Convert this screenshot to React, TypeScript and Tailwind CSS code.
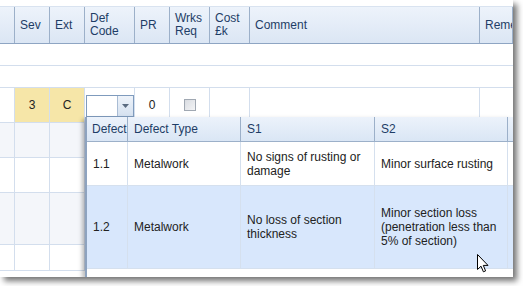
import React from 'react';

const cols = [
  { w: 'w-[15px]', label: '' },
  { w: 'w-[35px]', label: 'Sev' },
  { w: 'w-[35px]', label: 'Ext' },
  { w: 'w-[50px]', label: 'Def Code' },
  { w: 'w-[35px]', label: 'PR' },
  { w: 'w-[40px]', label: 'Wrks Req' },
  { w: 'w-[40px]', label: 'Cost £k' },
  { w: 'w-[230px]', label: 'Comment' },
  { w: 'flex-1', label: 'Remedial' },
];

const bodyRows = [
  { h: 'h-[22px]', bg: 'bg-white' },
  { h: 'h-[22px]', bg: 'bg-white' },
  { h: 'h-[35px]', bg: 'bg-white', edit: true },
  { h: 'h-[35px]', bg: 'bg-[#f4f6fa]' },
  { h: 'h-[35px]', bg: 'bg-white' },
  { h: 'h-[52px]', bg: 'bg-[#f4f6fa]' },
  { h: 'h-[26px]', bg: 'bg-white' },
];

const defects = [
  {
    code: '1.1',
    type: 'Metalwork',
    s1: 'No signs of rusting or damage',
    s2: 'Minor surface rusting',
    h: 'h-[44px]',
    selected: false,
  },
  {
    code: '1.2',
    type: 'Metalwork',
    s1: 'No loss of section thickness',
    s2: 'Minor section loss (penetration less than 5% of section)',
    h: 'h-[83px]',
    selected: true,
  },
];

function HeaderCell({ w, label }: { w: string; label: string }) {
  const words = label.split(' ');
  return (
    <div
      className={`${w} h-full shrink-0 border-r border-[#9cb0c9] px-[5px] flex flex-col justify-center overflow-hidden whitespace-nowrap leading-[13px]`}
    >
      {label === 'Comment' || label === 'Remedial' ? (
        <span>{label}</span>
      ) : (
        words.map((wd, i) => <span key={i}>{wd}</span>)
      )}
    </div>
  );
}

function EditRow() {
  return (
    <>
      <div className="w-[15px] shrink-0 border-r border-[#d3deed]" />
      <div className="w-[35px] shrink-0 border-r border-[#d3deed] bg-[#f6e6a8] flex items-center justify-center">3</div>
      <div className="w-[35px] shrink-0 border-r border-[#d3deed] bg-[#f6e6a8] flex items-center justify-center">C</div>
      <div className="w-[50px] shrink-0 border-r border-[#d3deed] relative">
        <div className="absolute left-[1px] top-[7px] w-[48px] h-[22px] border border-[#7f9bbd] bg-white flex">
          <div className="flex-1" />
          <div className="w-[16px] h-full border-l border-[#a9bcd4] bg-gradient-to-b from-[#eef3fa] to-[#d5e1f0] flex items-center justify-center">
            <svg width="7" height="4" viewBox="0 0 7 4">
              <path d="M0 0h7L3.5 4z" fill="#5a6b80" />
            </svg>
          </div>
        </div>
      </div>
      <div className="w-[35px] shrink-0 border-r border-[#d3deed] flex items-center justify-center">0</div>
      <div className="w-[40px] shrink-0 border-r border-[#d3deed] flex items-center justify-center">
        <div className="w-[12px] h-[12px] border border-[#a0a8b2] bg-gradient-to-br from-[#d8dbe0] to-[#f4f5f7] p-[1px]">
          <div className="w-full h-full bg-gradient-to-br from-[#dcdfe4] to-[#f0f1f3]" />
        </div>
      </div>
      <div className="w-[40px] shrink-0 border-r border-[#d3deed]" />
      <div className="w-[230px] shrink-0 border-r border-[#d3deed]" />
      <div className="flex-1" />
    </>
  );
}

function DefectPopup() {
  return (
    <div className="absolute left-[85px] top-[117px] right-0 bottom-0 bg-white border-l-2 border-[#8ea3bf] shadow-[-3px_2px_4px_rgba(0,0,0,0.25)] overflow-hidden">
      <div className="flex h-[25px] border-b border-[#9cb0c9] bg-gradient-to-b from-[#ecf2fb] to-[#dae6f5] text-[#1e3d66]">
        <div className="w-[41px] shrink-0 border-r border-[#9cb0c9] pl-[5px] flex items-center overflow-hidden">Defect</div>
        <div className="w-[113px] shrink-0 border-r border-[#9cb0c9] pl-[6px] flex items-center">Defect Type</div>
        <div className="w-[134px] shrink-0 border-r border-[#9cb0c9] pl-[6px] flex items-center">S1</div>
        <div className="w-[133px] shrink-0 border-r border-[#9cb0c9] pl-[6px] flex items-center">S2</div>
        <div className="flex-1" />
      </div>
      {defects.map((d) => (
        <div
          key={d.code}
          className={`flex ${d.h} border-b border-[#d5e0ee] ${d.selected ? 'bg-[#d8e7fc]' : 'bg-white'} text-[#222]`}
        >
          <div className="w-[41px] shrink-0 border-r border-[#d5e0ee] pl-[6px] flex items-center">{d.code}</div>
          <div className="w-[113px] shrink-0 border-r border-[#d5e0ee] pl-[6px] flex items-center">{d.type}</div>
          <div className="w-[134px] shrink-0 border-r border-[#d5e0ee] pl-[6px] pr-[6px] flex items-center leading-[14px]">{d.s1}</div>
          <div className="w-[133px] shrink-0 border-r border-[#d5e0ee] pl-[6px] pr-[6px] flex items-center leading-[14px]">{d.s2}</div>
          <div className="flex-1" />
        </div>
      ))}
    </div>
  );
}

function Cursor() {
  return (
    <svg className="absolute left-[477px] top-[254px]" width="13" height="19" viewBox="0 0 13 19">
      <path
        d="M0.5 0.5 L0.5 15.5 L4 12.2 L6.4 17.8 L8.6 16.9 L6.3 11.4 L11 11.4 Z"
        fill="#fff"
        stroke="#000"
        strokeWidth="1"
        strokeLinejoin="round"
      />
    </svg>
  );
}

export default function App() {
  return (
    <div className="w-[523px] h-[286px] bg-white overflow-hidden">
      <div className="relative w-[513px] h-[277px] bg-white shadow-[4px_4px_6px_rgba(0,0,0,0.55)] text-[12px] font-['Liberation_Sans',Arial,sans-serif] overflow-hidden">
        <div className="h-[7px] border-b border-[#d9e3f0]" />
        <div className="flex h-[37px] border-b border-[#8ea5c3] bg-gradient-to-b from-[#edf3fb] to-[#dbe6f4] text-[#1e3d66]">
          {cols.map((c, i) => (
            <HeaderCell key={i} w={c.w} label={c.label} />
          ))}
        </div>
        {bodyRows.map((r, i) => (
          <div key={i} className={`flex ${r.h} border-b border-[#d3deed] ${r.bg} text-[#222]`}>
            {r.edit ? (
              <EditRow />
            ) : i < 2 ? (
              <div className="flex-1" />
            ) : (
              cols.map((c, j) => (
                <div key={j} className={`${c.w} shrink-0 ${j < cols.length - 1 ? 'border-r border-[#d3deed]' : ''}`} />
              ))
            )}
          </div>
        ))}
        <DefectPopup />
        <Cursor />
      </div>
    </div>
  );
}
